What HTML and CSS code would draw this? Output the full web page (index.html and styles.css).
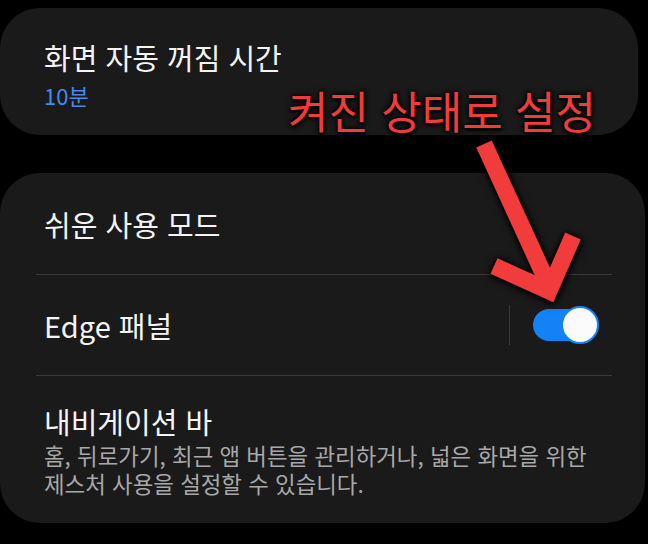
FILE: index.html
```html
<!DOCTYPE html>
<html lang="ko">
<head>
<meta charset="utf-8">
<link rel="stylesheet" href="styles.css">
</head>
<body>
<div class="screen">
  <section class="card card-top">
    <div class="title">화면 자동 꺼짐 시간</div>
    <div class="value">10분</div>
  </section>
  <section class="card card-list">
    <div class="row row-first">
      <div class="title">쉬운 사용 모드</div>
    </div>
    <div class="divider"></div>
    <div class="row row-switch">
      <div class="title grow">Edge 패널</div>
      <div class="vline"></div>
      <div class="switch">
        <span class="track"></span>
        <span class="thumb"></span>
      </div>
    </div>
    <div class="divider"></div>
    <div class="row row-last">
      <div class="title">내비게이션 바</div>
      <div class="desc">홈, 뒤로가기, 최근 앱 버튼을 관리하거나, 넓은 화면을 위한<br>제스처 사용을 설정할 수 있습니다.</div>
    </div>
  </section>
  <div class="note">켜진 상태로 설정</div>
  <svg class="arrow" width="648" height="544" viewBox="0 0 648 544">
    <g fill="none" stroke="#f23b3b" stroke-width="17" stroke-linejoin="miter" stroke-miterlimit="6">
      <path d="M484 144 L549 286"/>
      <path d="M494 266 L549 291 L573 236"/>
    </g>
  </svg>
</div>
</body>
</html>
```
FILE: styles.css
```css
html, body {
  margin: 0;
  padding: 0;
  background: #000;
}
body {
  width: 648px;
  height: 544px;
  overflow: hidden;
  font-family: "Noto Sans CJK KR", "Noto Sans", sans-serif;
  color: #f2f2f2;
}
.screen {
  position: relative;
  width: 648px;
  height: 544px;
  padding-top: 8px;
  box-sizing: border-box;
  display: flex;
  flex-direction: column;
  gap: 38px;
}
.card {
  background: #1a1a1a;
  border-radius: 40px;
  box-sizing: border-box;
}
.card-top {
  width: 638px;
  height: 127px;
  padding: 30px 0 0 44px;
}
.title {
  font-size: 29px;
  line-height: 38px;
  font-weight: 400;
  color: #f4f4f4;
  white-space: nowrap;
}
.value {
  font-size: 22px;
  line-height: 28px;
  margin-top: 5px;
  color: #3f8ded;
}
.card-list {
  width: 645px;
  height: 350px;
  padding: 0 33px 0 36px;
  display: flex;
  flex-direction: column;
}
.divider {
  height: 1px;
  background: #3a3a3a;
}
.row {
  padding: 0 8px;
  display: flex;
  align-items: center;
}
.row-first {
  height: 101px;
}
.row-switch {
  height: 100px;
}
.grow {
  flex: 1;
}
.vline {
  width: 1px;
  height: 40px;
  background: #3a3a3a;
  margin-right: 23px;
}
.switch {
  position: relative;
  width: 66px;
  height: 38px;
  margin-right: 5px;
}
.track {
  position: absolute;
  left: 0;
  top: 3px;
  width: 58px;
  height: 32px;
  border-radius: 16px;
  background: #1482f5;
}
.thumb {
  position: absolute;
  right: 0;
  top: 0;
  width: 34px;
  height: 34px;
  border-radius: 50%;
  background: #fbfbfb;
  border: 2px solid #1482f5;
}
.row-last {
  flex-direction: column;
  align-items: flex-start;
  padding-top: 26px;
}
.desc {
  font-size: 22.4px;
  line-height: 28px;
  color: #a8a8a8;
  margin-top: 1px;
  white-space: nowrap;
}
.note {
  position: absolute;
  left: 288px;
  top: 82px;
  font-size: 44px;
  line-height: 56px;
  color: #f23b3b;
  white-space: nowrap;
  text-shadow: 0 0 4px #000, 0 0 6px #000, 1px 2px 3px #000;
}
.arrow {
  position: absolute;
  left: 0;
  top: 0;
  filter: drop-shadow(0 0 3px #000) drop-shadow(1px 2px 3px rgba(0,0,0,0.8));
}
```
